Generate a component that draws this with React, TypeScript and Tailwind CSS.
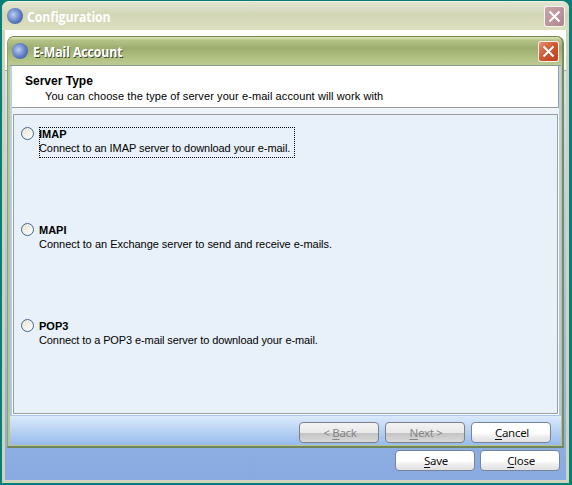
import React from 'react';

function Globe() {
  return (
    <span className="block size-4 shrink-0 rounded-full bg-[radial-gradient(circle_at_40%_42%,#c0d0ee_0%,#8ea6da_26%,#5a78c0_58%,#2a4488_100%)]" />
  );
}

function CloseBox({ tone }: { tone: string }) {
  return (
    <span className={`flex size-[21px] shrink-0 items-center justify-center rounded-[3px] border border-white/90 ${tone}`}>
      <svg width="13" height="13" viewBox="0 0 13 13" fill="none" stroke="#fff" strokeWidth="2">
        <path d="M1.5 1.5 11.5 11.5M11.5 1.5 1.5 11.5" />
      </svg>
    </span>
  );
}

function Button({ hotkey, before = '', rest, disabled = false }: { hotkey: string; before?: string; rest: string; disabled?: boolean }) {
  const look = disabled
    ? 'border-[#7c8087] text-[#858585] bg-[linear-gradient(#f3f3f3_0%,#e9e9e9_50%,#c3c3c4_54%,#d9d9d9_100%)]'
    : 'border-[#77849b] text-[#111] bg-[linear-gradient(#fff_0%,#fff_52%,#ebebeb_75%,#e1e1e1_100%)]';
  return (
    <button className={`flex h-[21px] w-20 shrink-0 items-center justify-center rounded-[4px] border pl-[2px] font-['Noto_Sans',sans-serif] text-[11.5px] leading-none tracking-[-0.3px] whitespace-pre ${look}`}>
      <span>{before}<span className="underline underline-offset-2">{hotkey}</span>{rest}</span>
    </button>
  );
}

function Option({ name, text, tracking, focused = false }: { name: string; text: string; tracking: string; focused?: boolean }) {
  return (
    <label className="flex h-24 items-start">
      <span className="size-[13px] shrink-0 rounded-full border border-[#45648c] bg-[linear-gradient(135deg,#e4e4d8,#fff)]" />
      <span className={`ml-[5px] h-[31px] border border-dotted text-[11px] leading-[14px] whitespace-nowrap ${focused ? 'w-[256px] border-black' : 'border-transparent'}`}>
        <b className="-mt-px -ml-px block">{name}</b>
        <span className={`-ml-px block ${tracking}`}>{text}</span>
      </span>
    </label>
  );
}

export default function App() {
  return (
    <main className="relative flex h-[485px] w-[572px] flex-col overflow-hidden bg-[#087e78] pt-px pr-[3px] pb-[2px] pl-[2px] font-['Liberation_Sans',Arial,sans-serif] text-black">
      <section className="flex flex-1 flex-col overflow-hidden rounded-t-[7px] border-t border-[#eef0dc] bg-[#d1d4bd]">
        <header className="flex h-7 shrink-0 items-center bg-[linear-gradient(#e2e5d3,#d2d6b6_45%,#dde0bf)] pr-[4px] pl-[5px]">
          <Globe />
          <h1 className="ml-[4px] flex-1 origin-left scale-x-[0.91] pt-[3px] font-['Open_Sans',sans-serif] text-[13.5px] font-bold leading-none tracking-[-0.1px] text-white">Configuration</h1>
          <CloseBox tone="bg-[linear-gradient(135deg,#c9a5a8,#ad8790)]" />
        </header>
        <div className="mr-[3px] mb-[3px] ml-[3px] flex flex-1 flex-col bg-[linear-gradient(#dceaf5,#9bbbe7_70%,#88aae1)]">
          <div className="h-[41px] border-b border-[#9da6a8] bg-white" />
          <footer className="mt-auto flex justify-end gap-[5px] pr-[6px] pb-[9px]">
            <Button hotkey="S" rest="ave" />
            <Button hotkey="C" rest="lose" />
          </footer>
        </div>
      </section>

      <section role="dialog" className="absolute top-9 left-[7px] flex h-[412px] w-[557px] flex-col overflow-hidden rounded-t-[7px] border-t border-r-2 border-b-2 border-l border-t-[#758349] border-r-[#7b8b63] border-b-[#708558] border-l-[#8fa071] bg-[#b7c78c]">
        <header className="flex h-7 shrink-0 items-center bg-[linear-gradient(#e0e8bd_0%,#b4c287_12%,#9eae70_40%,#b2c282_78%,#bcca94_100%)] pr-[3px] pl-[4px]">
          <Globe />
          <h2 className="ml-[5px] flex-1 origin-left scale-x-[0.91] pt-[3px] font-['Open_Sans',sans-serif] text-[13.5px] font-bold leading-none tracking-[-0.1px] text-white [text-shadow:1px_1px_0_#40482e]">E-Mail Account</h2>
          <CloseBox tone="bg-[linear-gradient(135deg,#e79372,#cf5732_48%,#b9411e)]" />
        </header>
        <div className="mr-px mb-px ml-[2px] flex flex-1 flex-col border-t border-t-[#8a999a] bg-[linear-gradient(#b9d2f2,#a9c5f0)] px-[2px]">
          <div className="flex h-[42px] flex-col border-r border-b border-[#989da0] bg-white pl-[13px]">
            <h3 className="mt-[8px] text-[12px] font-bold leading-[14px]">Server Type</h3>
            <p className="ml-5 mt-px text-[11px] leading-[14px] tracking-[0.09px] whitespace-nowrap">You can choose the type of server your e-mail account will work with</p>
          </div>
          <div className="h-[6px] shrink-0 bg-[#eef3f7]" />
          <div className="bg-white px-px pb-px">
            <div className="h-[300px] shrink-0 border border-[#989f9d] bg-[#e8f0fa] pt-3 pl-[7px]">
              <Option name="IMAP" text="Connect to an IMAP server to download your e-mail." tracking="tracking-[-0.07px]" focused />
              <Option name="MAPI" text="Connect to an Exchange server to send and receive e-mails." tracking="tracking-[-0.03px]" />
              <Option name="POP3" text="Connect to a POP3 e-mail server to download your e-mail." tracking="tracking-[-0.1px]" />
            </div>
          </div>
          <footer className="-mx-[2px] mt-px flex flex-1 justify-end gap-[6px] bg-[linear-gradient(#dbeafb,#98bbec)] pt-[6px] pr-[10px]">
            <Button before="< " hotkey="B" rest="ack" disabled />
            <Button hotkey="N" rest="ext >" disabled />
            <Button hotkey="C" rest="ancel" />
          </footer>
        </div>
      </section>
    </main>
  );
}
